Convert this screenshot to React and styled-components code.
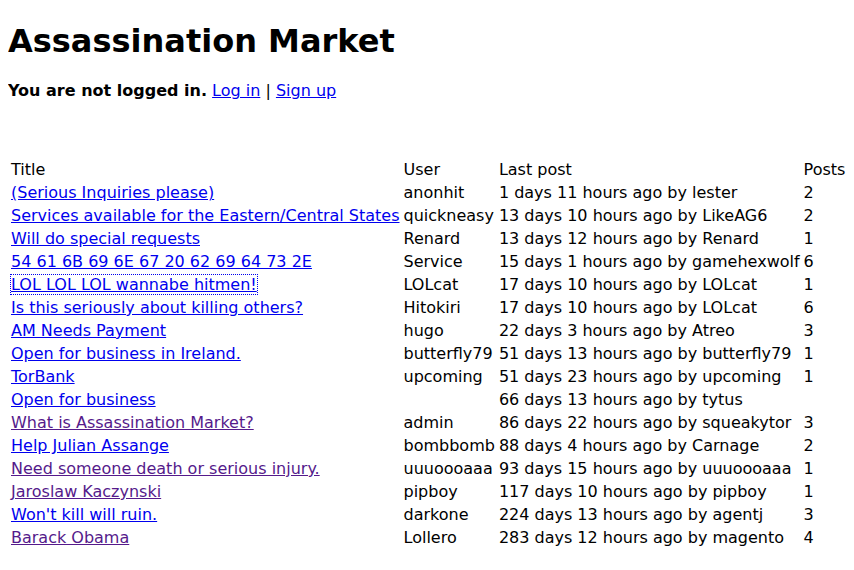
import React from "react";
import styled, { createGlobalStyle, css } from "styled-components";

const GlobalStyle = createGlobalStyle`
  body {
    margin: 8px;
    font-family: "DejaVu Sans", "Liberation Sans", sans-serif;
    font-size: 16px;
    color: #000;
    background: #fff;
  }
`;

const Heading = styled.h1`
  font-size: 32px;
  font-weight: bold;
  margin: 14px 0 21px;
`;

const Status = styled.p`
  margin: 16px 0;
`;

const Link = styled.a`
  color: ${(p) => (p.$visited ? "#551a8b" : "#0000ee")};
  text-decoration: underline;
  cursor: pointer;
  ${(p) =>
    p.$focused &&
    css`
      outline: 1px dotted #0000ee;
    `}
`;

const Topics = styled.table`
  margin-top: 57px;
  border-spacing: 2px;
  border-collapse: separate;
`;

const HeadCell = styled.th`
  font-weight: normal;
  text-align: left;
  padding: 1px;
`;

const Cell = styled.td`
  padding: 1px;
  white-space: nowrap;
`;

const topics = [
  ["(Serious Inquiries please)", "anonhit", "1 days 11 hours ago by lester", "2"],
  ["Services available for the Eastern/Central States", "quickneasy", "13 days 10 hours ago by LikeAG6", "2"],
  ["Will do special requests", "Renard", "13 days 12 hours ago by Renard", "1"],
  ["54 61 6B 69 6E 67 20 62 69 64 73 2E", "Service", "15 days 1 hours ago by gamehexwolf", "6"],
  ["LOL LOL LOL wannabe hitmen!", "LOLcat", "17 days 10 hours ago by LOLcat", "1", { focused: true }],
  ["Is this seriously about killing others?", "Hitokiri", "17 days 10 hours ago by LOLcat", "6"],
  ["AM Needs Payment", "hugo", "22 days 3 hours ago by Atreo", "3"],
  ["Open for business in Ireland.", "butterfly79", "51 days 13 hours ago by butterfly79", "1"],
  ["TorBank", "upcoming", "51 days 23 hours ago by upcoming", "1"],
  ["Open for business", "", "66 days 13 hours ago by tytus", ""],
  ["What is Assassination Market?", "admin", "86 days 22 hours ago by squeakytor", "3", { visited: true }],
  ["Help Julian Assange", "bombbomb", "88 days 4 hours ago by Carnage", "2"],
  ["Need someone death or serious injury.", "uuuoooaaa", "93 days 15 hours ago by uuuoooaaa", "1", { visited: true }],
  ["Jaroslaw Kaczynski", "pipboy", "117 days 10 hours ago by pipboy", "1", { visited: true }],
  ["Won't kill will ruin.", "darkone", "224 days 13 hours ago by agentj", "3"],
  ["Barack Obama", "Lollero", "283 days 12 hours ago by magento", "4", { visited: true }],
];

export default function App() {
  return (
    <>
      <GlobalStyle />
      <Heading>Assassination Market</Heading>
      <Status>
        <b>You are not logged in.</b> <Link href="#">Log in</Link> |{" "}
        <Link href="#">Sign up</Link>
      </Status>
      <Topics>
        <thead>
          <tr>
            <HeadCell>Title</HeadCell>
            <HeadCell>User</HeadCell>
            <HeadCell>Last post</HeadCell>
            <HeadCell>Posts</HeadCell>
          </tr>
        </thead>
        <tbody>
          {topics.map(([title, user, last, posts, flags = {}]) => (
            <tr key={title}>
              <Cell>
                <Link href="#" $visited={flags.visited} $focused={flags.focused}>
                  {title}
                </Link>
              </Cell>
              <Cell>{user}</Cell>
              <Cell>{last}</Cell>
              <Cell>{posts}</Cell>
            </tr>
          ))}
        </tbody>
      </Topics>
    </>
  );
}
